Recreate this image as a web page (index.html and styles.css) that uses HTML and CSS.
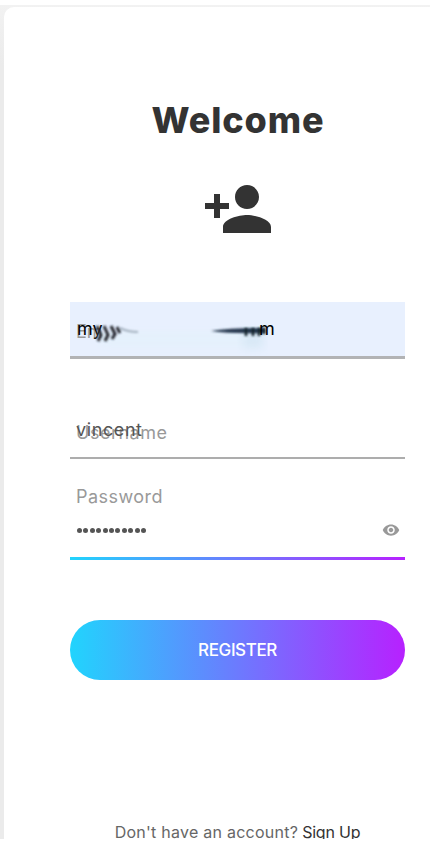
FILE: index.html
```
<!DOCTYPE html>
<html lang="en">
<head>
<meta charset="utf-8">
<meta name="viewport" content="width=device-width, initial-scale=1">
<title>Welcome</title>
<link rel="stylesheet" href="styles.css">
</head>
<body>
<div class="page">
  <main class="card">
    <h1 class="title">Welcome</h1>
    <svg class="avatar" viewBox="0 0 24 24" aria-hidden="true"><path d="M15 12c2.21 0 4-1.79 4-4s-1.79-4-4-4-4 1.79-4 4 1.79 4 4 4zm-9-2V7H4v3H1v2h3v3h2v-3h3v-2H6zm9 4c-2.67 0-8 1.34-8 4v2h16v-2c0-2.66-5.33-4-8-4z"/></svg>
    <form class="form">
      <div class="field filled">
        <span class="label email-label">Em</span>
        <span class="value email-start">my</span>
        <svg class="smudge" viewBox="0 0 190 50" aria-hidden="true">
          <defs>
            <filter id="soft" x="-30%" y="-80%" width="160%" height="260%"><feGaussianBlur stdDeviation="5"/></filter>
            <filter id="fine" x="-30%" y="-80%" width="160%" height="260%"><feGaussianBlur stdDeviation=".8"/></filter>
          </defs>
          <path d="M22 27h160v13H22z" fill="#e4f1fc" filter="url(#soft)"/>
          <path d="M165 26h20v16h-20z" fill="#d8e8f6" filter="url(#soft)"/>
          <g filter="url(#fine)" fill="none" stroke="#25282e">
            <path d="M19 20l4 9-3 6M26 20l4 9-3 6M33 20l4 8-3 5M39 21l3 6" stroke-width="3"/>
            <path d="M42 22q8 4 18 4" stroke="#a3b0be" stroke-width="2"/>
          </g>
          <path d="M133 25q18-3 54-3v5q-34 1-54-2z" fill="#26384f" filter="url(#fine)"/>
          <path d="M168 22v8M175 22v8M181 22v8M186 22v6" stroke="#17202c" stroke-width="2.600" fill="none" filter="url(#fine)"/>
        </svg>
        <span class="value email-end">m</span>
      </div>
      <div class="field username">
        <span class="label username-label">Username</span>
        <span class="value username-value">vincent</span>
      </div>
      <div class="field password">
        <span class="password-label">Password</span>
        <div class="secret">
          <span class="dots"><i></i><i></i><i></i><i></i><i></i><i></i><i></i><i></i><i></i><i></i><i></i></span>
          <svg class="eye" viewBox="0 0 24 24" aria-hidden="true"><path d="M12 4.500C7 4.500 2.730 7.610 1 12c1.730 4.390 6 7.500 11 7.500s9.270-3.110 11-7.500c-1.730-4.390-6-7.500-11-7.500zM12 17c-2.760 0-5-2.240-5-5s2.240-5 5-5 5 2.240 5 5-2.240 5-5 5zm0-8c-1.660 0-3 1.340-3 3s1.340 3 3 3 3-1.340 3-3-1.340-3-3-3z"/></svg>
        </div>
      </div>
      <button class="register" type="button">REGISTER</button>
    </form>
    <p class="signup"><span class="question">Don't have an account?</span><a class="link">Sign Up</a></p>
  </main>
</div>
</body>
</html>
```
FILE: styles.css
```
* { box-sizing: border-box; }
body {
  margin: 0;
  padding-top: 5px;
  height: 852px;
  overflow: hidden;
  background: #fff;
  font-family: Inter, "Open Sans", sans-serif;
}
.page {
  height: 834px;
  overflow: hidden;
  padding: 2px 0 0 4px;
  background: linear-gradient(#f2f2f2, #ebebeb 60px);
}
.card {
  height: 900px;
  padding: 87px 25px 0 66px;
  border-radius: 10px 0 0 0;
  background: #fff;
  display: flex;
  flex-direction: column;
  align-items: center;
}
.title {
  margin: 0 0 0 1px;
  height: 52px;
  line-height: 52px;
  font-size: 36px;
  font-weight: 800;
  color: #333;
  letter-spacing: .9px;
  white-space: nowrap;
}
.avatar {
  width: 72px;
  height: 72px;
  margin-top: 27px;
  fill: #333;
}
.form {
  width: 335px;
  margin-top: 57px;
}
.field {
  position: relative;
  height: 56px;
  border-bottom: 2px solid #adadad;
}
.filled {
  height: 57px;
  border-bottom: 3px solid #b2b3b5;
  background: #e8f0fe;
}
.username { margin-top: 44px; }
.label, .value {
  position: absolute;
  left: 6px;
  line-height: 24px;
  font-size: 18px;
  white-space: nowrap;
}
.label { color: #999; }
.value { color: #555; }
.email-label { top: 18px; }
.email-start { top: 15px; left: 7px; color: #000; }
.email-end { top: 15px; left: 189px; color: #000; }
.smudge {
  position: absolute;
  left: 8px;
  top: 4px;
  width: 190px;
  height: 50px;
}
.username-label { top: 18px; letter-spacing: .5px; }
.username-value { top: 15px; letter-spacing: .6px; }
.password {
  height: 101px;
  border-bottom: 0;
  padding: 26px 6px 0;
  background: linear-gradient(90deg, #21d4fd, #b721ff) bottom / 100% 3px no-repeat;
}
.password-label {
  display: block;
  line-height: 24px;
  font-size: 18px;
  letter-spacing: .45px;
  color: #999;
}
.secret {
  margin-top: 12px;
  display: flex;
  justify-content: space-between;
  align-items: center;
}
.dots { display: flex; gap: 1.4px; padding-left: 1px; }
.dots i { width: 5px; height: 5px; border-radius: 50%; background: #555; }
.eye { width: 18px; height: 18px; margin-right: -1px; fill: #999; }
.register {
  display: block;
  width: 335px;
  height: 60px;
  margin-top: 60px;
  padding: 0;
  border: 0;
  border-radius: 30px;
  background: linear-gradient(90deg, #21d4fd, #b721ff);
  color: #fff;
  font: 500 17px/60px Inter, sans-serif;
  letter-spacing: -.4px;
}
.signup {
  margin: 140px 0 0;
  display: flex;
  gap: 4px;
  line-height: 24px;
  font-size: 16px;
  color: #666;
  white-space: nowrap;
}
.question { letter-spacing: .25px; }
.link { color: #333; letter-spacing: -.2px; }
```
